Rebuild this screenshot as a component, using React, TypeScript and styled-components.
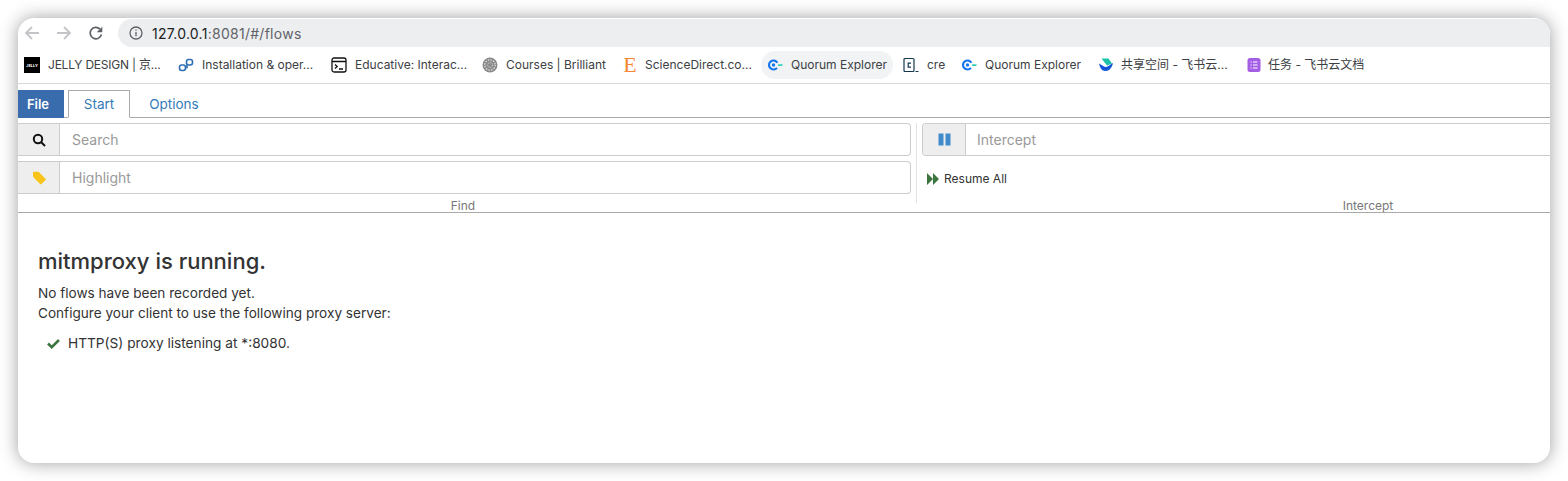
import React, { FC, ReactNode } from 'react'
import styled, { createGlobalStyle } from 'styled-components'

const GlobalStyle = createGlobalStyle`
  html, body {
    margin: 0;
    padding: 0;
    background: #ffffff;
    overflow: hidden;
  }
  * {
    box-sizing: border-box;
  }
  body {
    font-family: Inter, "Noto Sans CJK SC", sans-serif;
  }
`

const Page = styled.div`
  width: 1568px;
  height: 481px;
  padding: 18px;
`

const Window = styled.div`
  width: 1532px;
  height: 445px;
  background: #fff;
  border-radius: 16px;
  overflow: hidden;
  box-shadow: 0 0 18px rgba(0, 0, 0, 0.38);
`

const BrowserBar = styled.div`
  height: 29px;
  display: flex;
  align-items: center;
  padding-left: 6px;
`

const NavButton = styled.div<{ $left: number }>`
  width: 16px;
  height: 16px;
  margin-left: ${({ $left }) => $left}px;
  display: flex;
`

const Omnibox = styled.div`
  height: 28px;
  width: 1432px;
  margin-left: 14px;
  margin-right: -14px;
  flex: none;
  background: #edeef0;
  border-radius: 14px 0 0 14px;
  display: flex;
  align-items: center;
  padding-left: 11px;
  margin-top: 1px;
  font-size: 14px;
  letter-spacing: 0.27px;
`

const Host = styled.span`
  margin-left: 9px;
  color: #202124;
`

const UrlRest = styled.span`
  color: #5f6368;
`

const Bookmarks = styled.div`
  height: 37px;
  border-bottom: 1px solid #d8d9da;
  display: flex;
  align-items: center;
`

const Bookmark = styled.div<{ $width: number; $active?: boolean; $pad?: number }>`
  width: ${({ $width }) => $width}px;
  height: 28px;
  flex: none;
  display: flex;
  align-items: center;
  padding-left: ${({ $pad }) => $pad ?? 6}px;
  border-radius: 14px;
  background: ${({ $active }) => ($active ? '#f1f3f4' : 'transparent')};
`

const Favicon = styled.div<{ $gap: number }>`
  width: 16px;
  height: 16px;
  flex: none;
  margin-right: ${({ $gap }) => $gap}px;
  display: flex;
`

const BookmarkTitle = styled.span<{ $tight?: boolean }>`
  display: block;
  line-height: 16px;
  font-size: 12px;
  color: #3c4043;
  white-space: nowrap;
  letter-spacing: ${({ $tight }) => ($tight ? '-0.22px' : '0')};
`

const JellyIcon = styled.div`
  width: 16px;
  height: 16px;
  background: #000;
  color: #fff;
  font-size: 4px;
  font-weight: 700;
  display: flex;
  align-items: center;
  justify-content: center;
`

const ElsevierIcon = styled.div`
  width: 16px;
  height: 16px;
  display: flex;
  align-items: center;
  justify-content: center;
  font-family: "Liberation Serif", serif;
  font-size: 22px;
  line-height: 16px;
  color: #f58634;
`

const Tabs = styled.div`
  height: 34px;
  display: flex;
  align-items: flex-end;
  border-bottom: 1px solid #aaaaaa;
`

const FileTab = styled.div`
  width: 46px;
  height: 28px;
  margin-bottom: -1px;
  padding-right: 6px;
  background: #396cad;
  color: #fff;
  font-size: 13px;
  font-weight: 600;
  display: flex;
  align-items: center;
  justify-content: center;
`

const ViewTab = styled.div<{ $active?: boolean }>`
  width: ${({ $active }) => ($active ? '62px' : '88px')};
  height: 28px;
  margin-left: ${({ $active }) => ($active ? '4px' : '0')};
  margin-bottom: -1px;
  border: 1px solid ${({ $active }) => ($active ? '#aaaaaa' : 'transparent')};
  border-bottom-color: ${({ $active }) => ($active ? '#ffffff' : 'transparent')};
  color: #337ab7;
  font-size: 13.5px;
  display: flex;
  align-items: center;
  justify-content: center;
`

const Ribbon = styled.div`
  height: 95px;
  display: flex;
  border-bottom: 1px solid #aaaaaa;
`

const FindGroup = styled.div`
  width: 898px;
  flex: none;
  display: flex;
  flex-direction: column;
  gap: 5px;
  padding-top: 5px;
`

const Divider = styled.div`
  width: 1px;
  height: 80px;
  margin-top: 5px;
  flex: none;
  background: #e3e3e3;
`

const InterceptGroup = styled.div`
  width: 897px;
  flex: none;
  display: flex;
  flex-direction: column;
  gap: 5px;
  padding: 5px 0 0 5px;
`

const InputGroup = styled.div<{ $squareLeft?: boolean; $openRight?: boolean; $width: number }>`
  width: ${({ $width }) => $width}px;
  height: 33px;
  flex: none;
  display: flex;
  border: 1px solid #cccccc;
  border-left-width: ${({ $squareLeft }) => ($squareLeft ? '0' : '1px')};
  border-right-width: ${({ $openRight }) => ($openRight ? '0' : '1px')};
  border-radius: ${({ $squareLeft, $openRight }) =>
    `${$squareLeft ? 0 : 4}px ${$openRight ? 0 : 4}px ${$openRight ? 0 : 4}px ${$squareLeft ? 0 : 4}px`};
  overflow: hidden;
`

const Addon = styled.div<{ $width: number }>`
  width: ${({ $width }) => $width}px;
  flex: none;
  background: #eeeeee;
  border-right: 1px solid #cccccc;
  display: flex;
  align-items: center;
  justify-content: center;
`

const Placeholder = styled.div<{ $pad: number }>`
  padding-left: ${({ $pad }) => $pad}px;
  display: flex;
  align-items: center;
  font-size: 14px;
  color: #999999;
`

const GroupLabel = styled.div<{ $shift?: number }>`
  padding-right: ${({ $shift }) => $shift ?? 0}px;
  height: 14px;
  flex: none;
  text-align: center;
  font-size: 12px;
  line-height: 14px;
  color: #777777;
`

const ResumeRow = styled.div`
  height: 33px;
  flex: none;
  display: flex;
  align-items: center;
  padding: 2px 0 0 5px;
  font-size: 12px;
  color: #333333;
`

const ResumeIcon = styled.div`
  width: 12px;
  height: 12px;
  margin-right: 5px;
  display: flex;
`

const Content = styled.div`
  padding: 35px 20px 0;
  color: #333333;
`

const Heading = styled.h3`
  margin: 0 0 9px;
  font-size: 22px;
  line-height: 26px;
  font-weight: 500;
`

const Line = styled.div`
  font-size: 13.6px;
  line-height: 20px;
`

const ProxyList = styled.div`
  margin-top: 10px;
  display: flex;
  align-items: center;
  padding-left: 9px;
  font-size: 13.7px;
  line-height: 20px;
`

const CheckIcon = styled.div`
  width: 13px;
  height: 13px;
  margin-right: 8px;
  display: flex;
`

const Arrow: FC<{ flip?: boolean }> = ({ flip }) => (
  <svg width="16" height="16" viewBox="0 0 16 16" fill="none" stroke="#c2c4c7" strokeWidth="1.8">
    <g transform={flip ? 'rotate(180 8 8)' : undefined}>
      <path d="M15 8H2M8 2 2 8l6 6" />
    </g>
  </svg>
)

const QuorumIcon: FC = () => (
  <svg width="16" height="16" viewBox="0 0 16 16" fill="none">
    <path d="M10.400 5.750A4.500 4.500 0 1 0 9.950 10.900" stroke="#1677ee" strokeWidth="2.200" />
    <circle cx="6.500" cy="8" r="1.700" fill="#1677ee" />
    <path d="M11 8.200h4.500" stroke="#35d0b8" strokeWidth="1.800" />
  </svg>
)

interface BookmarkItem {
  title: string
  width: number
  gap: number
  icon: ReactNode
  active?: boolean
  pad?: number
  tight?: boolean
}

const bookmarks: BookmarkItem[] = [
  { title: 'JELLY DESIGN | 京...', width: 154, gap: 8, icon: <JellyIcon>JELLY</JellyIcon>, tight: true },
  {
    title: 'Installation & oper...',
    width: 153,
    gap: 8,
    icon: (
      <svg width="16" height="16" viewBox="0 0 16 16" fill="none" stroke="#2b6fb3" strokeWidth="1.600">
        <rect x="1.500" y="8" width="6" height="5.500" rx="2.200" />
        <rect x="8.500" y="2.500" width="6" height="5.500" rx="2.200" />
        <path d="M7.500 10.500h1.500V8" />
      </svg>
    ),
  },
  {
    title: 'Educative: Interac...',
    width: 151,
    gap: 8,
    icon: (
      <svg width="16" height="16" viewBox="0 0 16 16" fill="none" stroke="#111" strokeWidth="1.300">
        <rect x="1" y="1" width="14" height="14" rx="2" />
        <path d="M1 4.500h14M4 7.500l2.200 2L4 11.500M8 12h4" />
      </svg>
    ),
  },
  {
    title: 'Courses | Brilliant',
    width: 140,
    gap: 8,
    icon: (
      <svg width="16" height="16" viewBox="0 0 16 16" fill="none">
        <circle cx="8" cy="8" r="7.500" fill="#8a8a8a" />
        <circle cx="8" cy="8" r="5.200" fill="none" stroke="#e2e2e2" strokeWidth="1.300" strokeDasharray="1.500 1.200" />
        <circle cx="8" cy="8" r="2.400" fill="none" stroke="#e4e4e4" strokeWidth="1" strokeDasharray="1 1" />
      </svg>
    ),
  },
  { title: 'ScienceDirect.co...', width: 145, gap: 7, icon: <ElsevierIcon>E</ElsevierIcon> },
  { title: 'Quorum Explorer', width: 132, gap: 8, icon: <QuorumIcon />, active: true },
  {
    title: 'cre',
    width: 62,
    gap: 8,
    pad: 10,
    icon: (
      <svg width="16" height="16" viewBox="0 0 16 16" fill="none" stroke="#12374f" strokeWidth="1.200">
        <rect x="1" y="1.500" width="10" height="13" rx="1" />
        <path d="M8 6.200H5.200v4H8M12.500 14.500h3" />
      </svg>
    ),
  },
  { title: 'Quorum Explorer', width: 137, gap: 8, icon: <QuorumIcon /> },
  {
    title: '共享空间 - 飞书云...',
    width: 148,
    gap: 7,
    icon: (
      <svg width="16" height="16" viewBox="0 0 16 16">
        <path d="M3.500 1.500h7l3.500 5-5 2z" fill="#19c2a8" />
        <path d="M1 6.500c3 1.500 5 3.500 7 3.500s4-2.500 7-4c-1 4.500-3.500 8-7.500 8S2 10.500 1 6.500z" fill="#1456d9" />
      </svg>
    ),
  },
  {
    title: '任务 - 飞书云文档',
    width: 130,
    gap: 6,
    icon: (
      <svg width="16" height="16" viewBox="0 0 16 16">
        <rect x="1.500" y="1" width="13" height="14" rx="2.500" fill="#a45ee5" />
        <path d="M4.500 5h1.200M7 5h4.500M4.500 8h1.200M7 8h4.500M4.500 11h1.200M7 11h4.500" stroke="#fff" strokeWidth="1.200" />
      </svg>
    ),
  },
]

export default function App() {
  return (
    <Page>
      <GlobalStyle />
      <Window>
        <BrowserBar>
          <NavButton $left={0}>
            <Arrow />
          </NavButton>
          <NavButton $left={16}>
            <Arrow flip />
          </NavButton>
          <NavButton $left={16}>
            <svg width="16" height="16" viewBox="0 0 16 16" fill="none">
              <path d="M13.400 9.500A5.700 5.700 0 1 1 12 4.200" stroke="#5f6368" strokeWidth="1.700" />
              <path d="M14.300 1.700v5.600H8.700z" fill="#5f6368" />
            </svg>
          </NavButton>
          <Omnibox>
            <svg width="14" height="14" viewBox="0 0 14 14" fill="none" stroke="#5f6368" strokeWidth="1.300">
              <circle cx="7" cy="7" r="6" />
              <path d="M7 6v4.200M7 3.500v1.300" />
            </svg>
            <Host>
              127.0.0.1<UrlRest>:8081/#/flows</UrlRest>
            </Host>
          </Omnibox>
        </BrowserBar>
        <Bookmarks>
          {bookmarks.map((item, i) => (
            <Bookmark key={i} $width={item.width} $active={item.active} $pad={item.pad}>
              <Favicon $gap={item.gap}>{item.icon}</Favicon>
              <BookmarkTitle $tight={item.tight}>{item.title}</BookmarkTitle>
            </Bookmark>
          ))}
        </Bookmarks>
        <Tabs>
          <FileTab>File</FileTab>
          <ViewTab $active>Start</ViewTab>
          <ViewTab>Options</ViewTab>
        </Tabs>
        <Ribbon>
          <FindGroup>
            <InputGroup $squareLeft $width={893}>
              <Addon $width={42}>
                <svg width="14" height="14" viewBox="0 0 14 14" fill="none" stroke="#111" strokeWidth="2">
                  <circle cx="6" cy="6" r="4.200" />
                  <path d="M9 9l4 4" />
                </svg>
              </Addon>
              <Placeholder $pad={12}>Search</Placeholder>
            </InputGroup>
            <InputGroup $squareLeft $width={893}>
              <Addon $width={42}>
                <svg width="14" height="14" viewBox="0 0 14 14">
                  <path d="M1 1.500a.8.800 0 0 1 .8-.8h4.700l7 7a1 1 0 0 1 0 1.400l-4 4a1 1 0 0 1-1.400 0l-7-7z" fill="#f8c419" />
                </svg>
              </Addon>
              <Placeholder $pad={12}>Highlight</Placeholder>
            </InputGroup>
            <GroupLabel $shift={8}>Find</GroupLabel>
          </FindGroup>
          <Divider />
          <InterceptGroup>
            <InputGroup $openRight $width={892}>
              <Addon $width={43}>
                <svg width="13" height="13" viewBox="0 0 13 13" fill="#428bca">
                  <rect x="0.500" y="0.500" width="5" height="12" />
                  <rect x="7.500" y="0.500" width="5" height="12" />
                </svg>
              </Addon>
              <Placeholder $pad={11}>Intercept</Placeholder>
            </InputGroup>
            <ResumeRow>
              <ResumeIcon>
                <svg width="12" height="12" viewBox="0 0 12 12" fill="#3c763d">
                  <path d="M0 0l6 6-6 6zM6 0l6 6-6 6z" />
                </svg>
              </ResumeIcon>
              Resume All
            </ResumeRow>
            <GroupLabel>Intercept</GroupLabel>
          </InterceptGroup>
        </Ribbon>
        <Content>
          <Heading>mitmproxy is running.</Heading>
          <Line>No flows have been recorded yet.</Line>
          <Line>Configure your client to use the following proxy server:</Line>
          <ProxyList>
            <CheckIcon>
              <svg width="13" height="13" viewBox="0 0 13 13" fill="none" stroke="#3c763d" strokeWidth="2.600">
                <path d="M1 6.500l3.700 3.700L12 3" />
              </svg>
            </CheckIcon>
            HTTP(S) proxy listening at *:8080.
          </ProxyList>
        </Content>
      </Window>
    </Page>
  )
}
